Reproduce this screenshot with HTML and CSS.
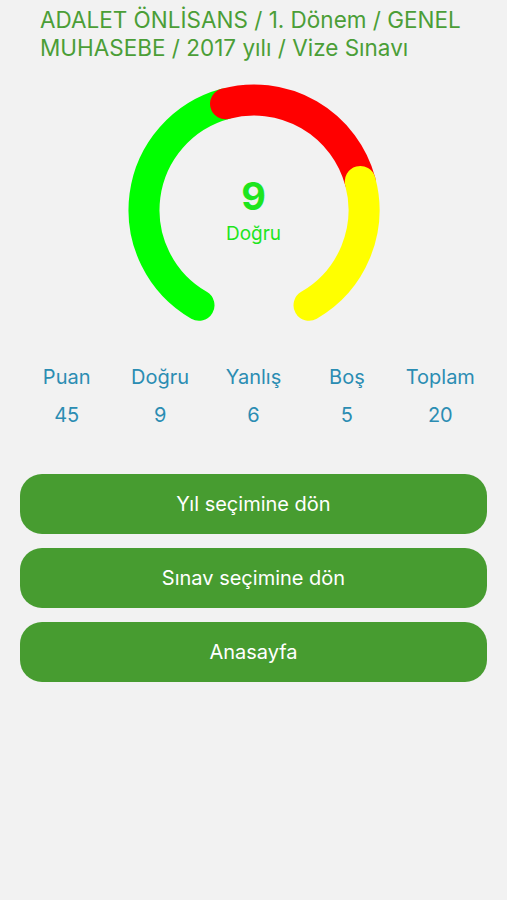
FILE: index.html
```html
<!DOCTYPE html>
<html lang="tr">
<head>
    <meta charset="UTF-8">
    <meta name="viewport" content="width=device-width, initial-scale=1.0">
    <title>Sonuç</title>
    <link rel="stylesheet" href="styles.css">
</head>
<body>
    <h1 class="exam-title">ADALET ÖNLİSANS / 1. Dönem / GENEL MUHASEBE / 2017 yılı / Vize Sınavı</h1>

    <!-- Result gauge: 300 degree sweep, split by dogru / yanlis / bos -->
    <div class="gauge">
        <svg class="gauge-ring" width="260" height="260" viewBox="0 0 260 260">
            <path d="M75 225.26 A110 110 0 0 1 101.53 23.75" stroke="#00ff00"/>
            <path d="M101.53 23.75 A110 110 0 0 1 236.25 101.53" stroke="#ff0000"/>
            <path d="M236.25 101.53 A110 110 0 0 1 185 225.26" stroke="#ffff00"/>
        </svg>
        <div class="gauge-label">
            <span class="gauge-value">9</span>
            <span class="gauge-caption">Doğru</span>
        </div>
    </div>

    <div class="stats">
        <div class="stat"><span>Puan</span><span>45</span></div>
        <div class="stat"><span>Doğru</span><span>9</span></div>
        <div class="stat"><span>Yanlış</span><span>6</span></div>
        <div class="stat"><span>Boş</span><span>5</span></div>
        <div class="stat"><span>Toplam</span><span>20</span></div>
    </div>

    <div class="actions">
        <button class="action-btn">Yıl seçimine dön</button>
        <button class="action-btn">Sınav seçimine dön</button>
        <button class="action-btn">Anasayfa</button>
    </div>
</body>
</html>
```

FILE: styles.css
```css
/* General styles */
body {
    margin: 0;
    padding: 0;
    background-color: #f2f2f2;
    font-family: Inter, "Liberation Sans", Arial, sans-serif;
    width: 507px;
    height: 900px;
}

/* Title */
.exam-title {
    margin: 0;
    padding: 6px 40px 0 40px;
    font-size: 22.5px;
    font-weight: normal;
    line-height: 28px;
    color: #4b9e37;
}

/* Gauge */
.gauge {
    position: relative;
    width: 260px;
    height: 260px;
    margin: 18px auto 0 auto;
}

.gauge-ring {
    display: block;
    fill: none;
}

.gauge-ring path {
    stroke-width: 31;
    stroke-linecap: round;
}

.gauge-label {
    position: absolute;
    left: 0;
    right: 0;
    top: 95px;
    display: flex;
    flex-direction: column;
    align-items: center;
    color: #1ee51e;
}

.gauge-value {
    font-size: 38px;
    font-weight: bold;
    line-height: 42px;
}

.gauge-caption {
    font-size: 19px;
    line-height: 22px;
    margin-top: 6px;
}

/* Stats row */
.stats {
    display: grid;
    grid-template-columns: repeat(5, 1fr);
    margin: 25px 20px 0 20px;
}

.stat {
    display: flex;
    flex-direction: column;
    align-items: center;
    gap: 14px;
    color: #2b8db3;
    font-size: 20px;
    line-height: 24px;
}

/* Buttons */
.actions {
    display: flex;
    flex-direction: column;
    gap: 14px;
    margin: 47px 20px 0 20px;
}

.action-btn {
    height: 60px;
    border: none;
    border-radius: 22px;
    background-color: #479c30;
    color: #ffffff;
    font-family: Inter, "Liberation Sans", Arial, sans-serif;
    font-size: 20px;
    cursor: pointer;
}
```
